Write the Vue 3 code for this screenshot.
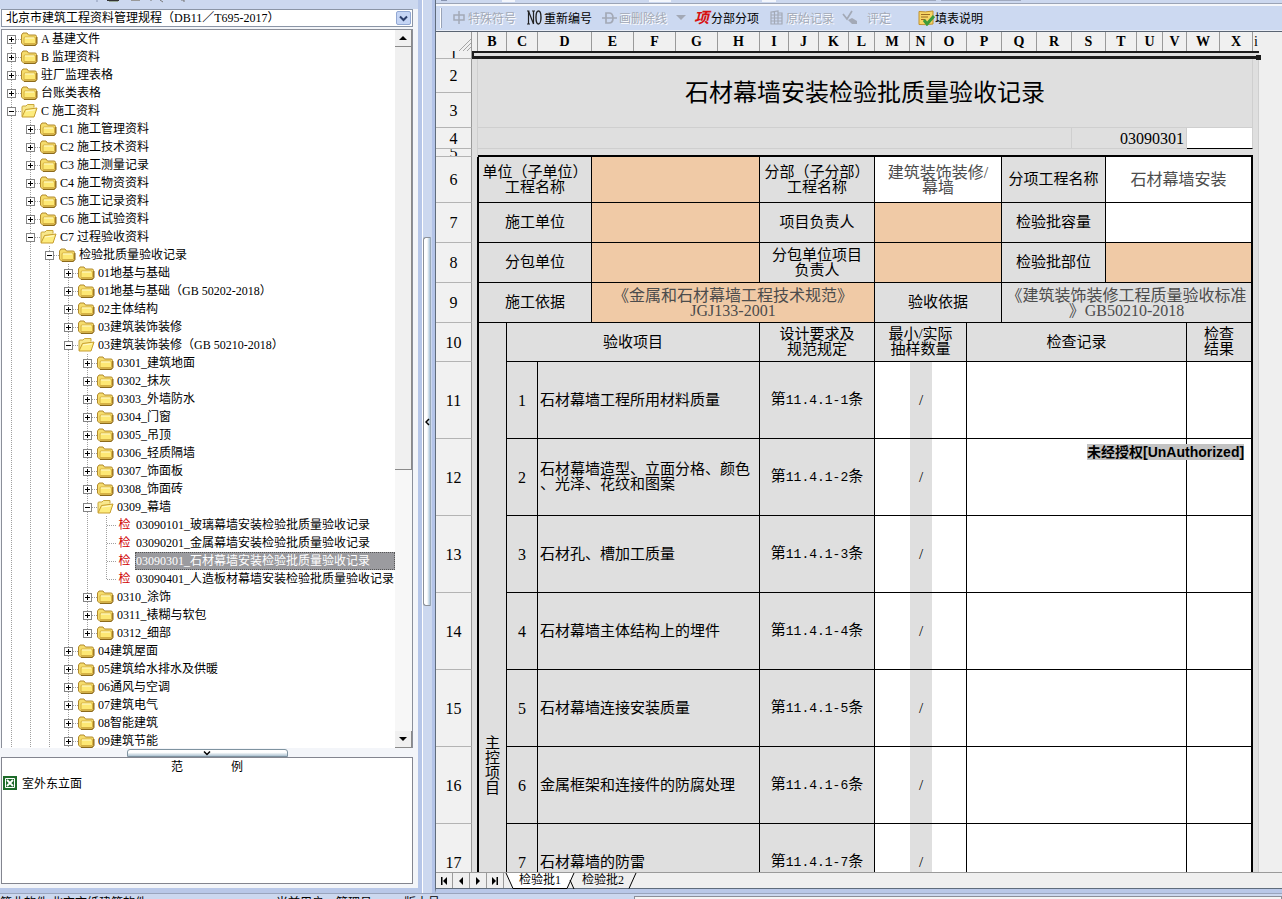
<script setup>
import { ref } from 'vue'

const regulation = ref('db11')
const selected = ref('03090301')

const rawTree = [
  [0, '+', 'A 基建文件'],
  [0, '+', 'B 监理资料'],
  [0, '+', '驻厂监理表格'],
  [0, '+', '台账类表格'],
  [0, '-', 'C 施工资料', 'open'],
  [1, '+', 'C1 施工管理资料'],
  [1, '+', 'C2 施工技术资料'],
  [1, '+', 'C3 施工测量记录'],
  [1, '+', 'C4 施工物资资料'],
  [1, '+', 'C5 施工记录资料'],
  [1, '+', 'C6 施工试验资料'],
  [1, '-', 'C7 过程验收资料', 'open'],
  [2, '-', '检验批质量验收记录'],
  [3, '+', '01地基与基础'],
  [3, '+', '01地基与基础（GB 50202-2018）'],
  [3, '+', '02主体结构'],
  [3, '+', '03建筑装饰装修'],
  [3, '-', '03建筑装饰装修（GB 50210-2018）', 'open'],
  [4, '+', '0301_建筑地面'],
  [4, '+', '0302_抹灰'],
  [4, '+', '0303_外墙防水'],
  [4, '+', '0304_门窗'],
  [4, '+', '0305_吊顶'],
  [4, '+', '0306_轻质隔墙'],
  [4, '+', '0307_饰面板'],
  [4, '+', '0308_饰面砖'],
  [4, '-', '0309_幕墙', 'open'],
  [5, '', '03090101_玻璃幕墙安装检验批质量验收记录'],
  [5, '', '03090201_金属幕墙安装检验批质量验收记录'],
  [5, '', '03090301_石材幕墙安装检验批质量验收记录'],
  [5, '', '03090401_人造板材幕墙安装检验批质量验收记录', 'last'],
  [4, '+', '0310_涂饰'],
  [4, '+', '0311_裱糊与软包'],
  [4, '+', '0312_细部', 'last'],
  [3, '+', '04建筑屋面'],
  [3, '+', '05建筑给水排水及供暖'],
  [3, '+', '06通风与空调'],
  [3, '+', '07建筑电气'],
  [3, '+', '08智能建筑'],
  [3, '+', '09建筑节能'],
]
const tree = rawTree.map(([depth, sign, label, flag], i) => ({
  depth, sign, label,
  open: flag === 'open',
  last: flag === 'last',
  first: i === 0,
  code: label.slice(0, 8),
}))

const columns = [
  ['', 6], ['B', 29], ['C', 31], ['D', 54], ['E', 42], ['F', 42], ['G', 42], ['H', 42],
  ['I', 29], ['J', 30], ['K', 30], ['L', 26], ['M', 35], ['N', 22], ['O', 35], ['P', 35],
  ['Q', 35], ['R', 35], ['S', 34], ['T', 31], ['U', 26], ['V', 24], ['W', 33], ['X', 33], ['i', 6],
]

const formRows = [
  { n: 6, h: 46, cells: [
    [3, '单位（子单位）\n工程名称'], [4, '', 'peach'], [4, '分部（子分部）\n工程名称'],
    [4, '建筑装饰装修/\n幕墙', 'white fill'], [3, '分项工程名称'], [5, '石材幕墙安装', 'white fill edge'],
  ] },
  { n: 7, h: 40, cells: [
    [3, '施工单位'], [4, '', 'peach'], [4, '项目负责人'], [4, '', 'peach'], [3, '检验批容量'], [5, '', 'white edge'],
  ] },
  { n: 8, h: 40, cells: [
    [3, '分包单位'], [4, '', 'peach'], [4, '分包单位项目\n负责人'], [4, '', 'peach'], [3, '检验批部位'], [5, '', 'peach edge'],
  ] },
  { n: 9, h: 40, cells: [
    [3, '施工依据'], [8, '《金属和石材幕墙工程技术规范》\nJGJ133-2001', 'peach fill'], [4, '验收依据'],
    [8, '《建筑装饰装修工程质量验收标准\n》GB50210-2018', 'fill edge'],
  ] },
]

const items = [
  [11, '1', '石材幕墙工程所用材料质量'],
  [12, '2', '石材幕墙造型、立面分格、颜色\n、光泽、花纹和图案'],
  [13, '3', '石材孔、槽加工质量'],
  [14, '4', '石材幕墙主体结构上的埋件'],
  [15, '5', '石材幕墙连接安装质量'],
  [16, '6', '金属框架和连接件的防腐处理'],
  [17, '7', '石材幕墙的防雷'],
  ['', '', ''], ['', '', ''], ['', '', ''], ['', '', ''],
]
</script>

<template>
  <div class="app">
    <div class="work">
      <aside class="left">
        <div class="strip">
          <svg width="200" height="4" viewBox="0 0 200 4" aria-hidden="true">
            <path d="M97 0v2" stroke="#8b98b5" />
            <path d="M107 0h12v1h-12z" fill="#333" />
            <path d="M109 1h9v1h-9z" fill="#9a9" />
            <path d="M131 0h9v1h-9z" fill="#999" />
            <path d="M150 0h2M160 0l3 2M181 0h3v2" stroke="#777" fill="none" />
          </svg>
        </div>
        <div class="combo">
          <select v-model="regulation" aria-label="规程">
            <option value="db11">北京市建筑工程资料管理规程（DB11／T695-2017）</option>
          </select>
          <span class="combo-arrow">
            <svg width="9" height="7" viewBox="0 0 9 7"><path d="M1 1.5l3.5 3.5L8 1.5" fill="none" stroke="#2c3e6b" stroke-width="2" /></svg>
          </span>
        </div>

        <div class="tree-box">
          <ul class="tree">
            <li v-for="(row, i) in tree" :key="i" class="tree-row">
              <i v-for="g in row.depth" :key="g" class="guide"></i>
              <span class="node" :class="{ last: row.last, first: row.first }">
                <button v-if="row.sign" class="expander" :aria-label="row.sign === '+' ? '展开' : '折叠'">
                  <svg width="9" height="9" viewBox="0 0 9 9">
                    <path d="M2 4.5h5" stroke="#000" />
                    <path v-if="row.sign === '+'" d="M4.5 2v5" stroke="#000" />
                  </svg>
                </button>
              </span>
              <span v-if="!row.sign" class="leaf-icon">检</span>
              <svg v-else-if="row.open" class="folder" width="17" height="16" viewBox="0 0 17 16">
                <path d="M1 13.500V4q0-1 1-1h3l1.500-1.500H13v3" fill="#f8e88c" stroke="#c9a63a" />
                <path d="M1 14L4.500 6.500L16 5L13 14z" fill="#fdec7e" stroke="#c79d2e" />
                <path d="M5 8l9-1.200" stroke="#fffbd0" />
              </svg>
              <svg v-else class="folder" width="17" height="16" viewBox="0 0 17 16">
                <path d="M.5 12V4l1.500-2h4l1.500 2H14q1.500 0 1.500 1.500V12.500L14 14H2.500z" fill="#f5dc6c" stroke="#b28a2c" />
                <path d="M3 12.500V7q0-1 1-1h9.500q1 0 1 1v5.500z" fill="#fde874" stroke="#d6b143" />
                <path d="M3 14.500h11.500l1.500-2V6" fill="none" stroke="#8c6a1c" />
                <path d="M4 7h9" stroke="#fffbd2" />
              </svg>
              <button
                class="label"
                :class="{ sel: row.code === selected }"
                @click="selected = row.code"
              >{{ row.label }}</button>
            </li>
          </ul>
          <div class="scroll">
            <button class="sb" aria-label="向上"><svg width="8" height="4" viewBox="0 0 8 4"><path d="M0 4l4-4 4 4z" /></svg></button>
            <div class="thumb"></div>
            <div class="track"></div>
            <button class="sb" aria-label="向下"><svg width="8" height="4" viewBox="0 0 8 4"><path d="M0 0l4 4 4-4z" /></svg></button>
          </div>
        </div>

        <div class="hsplit">
          <button class="hgrip" aria-label="收起范例">
            <svg width="8" height="5" viewBox="0 0 8 5"><path d="M1 .5l3 3 3-3" fill="none" stroke="#000" stroke-width="1.500" /></svg>
          </button>
        </div>

        <section class="examples">
          <h2 class="ex-head"><span>范</span><span>例</span></h2>
          <a class="ex-item" href="#">
            <svg width="14" height="14" viewBox="0 0 14 14">
              <path d="M0 0h14v14H0z" fill="#1d6b2a" />
              <path d="M2.500 2.500h9v9h-9z" fill="none" stroke="#fff" />
              <path d="M4 4l6 6M10 4l-6 6" stroke="#fff" stroke-width="1.800" />
            </svg>
            <span>室外东立面</span>
          </a>
        </section>
      </aside>

      <div class="vsplit">
        <button class="vgrip" aria-label="收起左栏">
          <svg width="5" height="8" viewBox="0 0 5 8"><path d="M4 1L1 4l3 3" fill="none" stroke="#000" stroke-width="1.500" /></svg>
        </button>
      </div>

      <main class="right">
        <div class="strip2">
          <svg width="600" height="3" viewBox="0 0 600 3" aria-hidden="true">
            <path d="M66 0h13v2H66zM213 0h22v2h-22zM326 0h14v2h-14z" fill="#f3f6fc" />
            <path d="M434 0h66v1h-66zM505 0h80v1h-80z" fill="#9fa9bf" />
            <path d="M5 0h6v1H5z" fill="#8894b0" />
          </svg>
        </div>
        <div class="toolbar">
          <i class="grip"></i>
          <button class="tool t1 off">
            <svg width="12" height="13" viewBox="0 0 12 13"><path d="M1 4h10v5H1zM6 0v13" fill="none" stroke="currentColor" stroke-width="1.500" /></svg>
            <span>特殊符号</span>
          </button>
          <button class="tool t2">
            <svg width="15" height="15" viewBox="0 0 15 15">
              <path d="M1.500 1v13M6.500 1v13M1.500 1l5 13M0 1h2.500M5 1h3M0 14h3" fill="none" stroke="#222" stroke-width="1.200" />
              <ellipse cx="11.500" cy="7.500" rx="2.500" ry="6.500" fill="none" stroke="#222" stroke-width="1.400" />
            </svg>
            <span>重新编号</span>
          </button>
          <button class="tool t3 off">
            <svg width="15" height="12" viewBox="0 0 15 12"><path d="M4 1h3q4 0 4 5t-4 5H4zM0 6h15" fill="none" stroke="currentColor" stroke-width="1.700" /></svg>
            <span>画删除线</span>
            <svg class="drop" width="10" height="5" viewBox="0 0 10 5"><path d="M0 0h10L5 5z" fill="#a3a9b6" /></svg>
          </button>
          <button class="tool t4">
            <b class="xiang">项</b>
            <span>分部分项</span>
          </button>
          <button class="tool t5 off">
            <svg width="13" height="15" viewBox="0 0 13 15">
              <path d="M1 2l7-1v13H1zM8 3h4v11H8M1 5h11M1 8h11M1 11h11M4.500 1.500V14" fill="none" stroke="currentColor" stroke-width="1.200" />
            </svg>
            <span>原始记录</span>
          </button>
          <button class="tool t6 off">
            <svg width="16" height="15" viewBox="0 0 16 15">
              <path d="M1 4l4 5 5-8" fill="none" stroke="currentColor" stroke-width="1.700" />
              <path d="M6 10l4-2 5 3v3h-5z" fill="currentColor" />
            </svg>
            <span>评定</span>
          </button>
          <button class="tool t7">
            <svg width="17" height="16" viewBox="0 0 17 16">
              <path d="M1 1.500q6 1 14-.5v13q-8 1-14 .5z" fill="#f7d565" stroke="#c1912e" />
              <path d="M3 4.500h9M3 7h7M3 9.500h4" stroke="#9b6b22" />
              <path d="M6 10l3 4 7-8" fill="none" stroke="#3d9a3b" stroke-width="3" />
            </svg>
            <span>填表说明</span>
          </button>
        </div>

        <div class="sheet">
          <table>
            <colgroup>
              <col class="c-head" />
              <col v-for="c in columns" :key="c[0]" :style="{ width: c[1] + 'px' }" />
            </colgroup>
            <thead>
              <tr>
                <th class="corner">
                  <svg width="12" height="12" viewBox="0 0 12 12"><path d="M0 12L12 0M4 12l8-8M8 12l4-4" stroke="#a5a5a5" /></svg>
                </th>
                <th v-for="c in columns" :key="c[0]" class="colh" :class="{ thin: c[0] === 'i' }">{{ c[0] }}</th>
              </tr>
            </thead>
            <tbody>
              <tr>
                <th class="rowh"><div :style="{ height: '7px' }">1</div></th>
                <td colspan="25" class="picked"><i class="handle"></i></td>
              </tr>
              <tr>
                <th class="rowh"><div :style="{ height: '33px' }">2</div></th>
                <td rowspan="2" class="side"></td>
                <td colspan="23" rowspan="2" class="title">石材幕墙安装检验批质量验收记录</td>
                <td rowspan="2" class="side"></td>
              </tr>
              <tr>
                <th class="rowh"><div :style="{ height: '34px' }">3</div></th>
              </tr>
              <tr>
                <th class="rowh"><div :style="{ height: '20px' }">4</div></th>
                <td class="side"></td>
                <td colspan="17" class="soft"></td>
                <td colspan="4" class="soft number">03090301</td>
                <td colspan="2" class="blank"></td>
                <td class="side"></td>
              </tr>
              <tr>
                <th class="rowh"><div :style="{ height: '7px' }">5</div></th>
                <td class="side"></td>
                <td colspan="23" class="topline"></td>
                <td class="side"></td>
              </tr>
              <tr v-for="r in formRows" :key="r.n">
                <th class="rowh"><div :style="{ height: r.h - 1 + 'px' }">{{ r.n }}</div></th>
                <td class="side dark"></td>
                <td v-for="(c, k) in r.cells" :key="k" :colspan="c[0]" class="cell" :class="[c[2], { start: k === 0 }]">{{ c[1] }}</td>
                <td class="side"></td>
              </tr>
              <tr>
                <th class="rowh"><div :style="{ height: '38px' }">10</div></th>
                <td class="side dark"></td>
                <td rowspan="12" class="cell start">主<br />控<br />项<br />目</td>
                <td colspan="6" class="cell">验收项目</td>
                <td colspan="4" class="cell">设计要求及<br />规范规定</td>
                <td colspan="3" class="cell">最小/实际<br />抽样数量</td>
                <td colspan="7" class="cell">检查记录</td>
                <td colspan="2" class="cell edge">检查<br />结果</td>
                <td class="side"></td>
              </tr>
              <tr v-for="(it, i) in items" :key="i">
                <th class="rowh"><div :style="{ height: '76px' }">{{ it[0] }}</div></th>
                <td class="side dark"></td>
                <td class="cell num">{{ it[1] }}</td>
                <td colspan="5" class="cell name">{{ it[2] }}</td>
                <td colspan="4" class="cell"><template v-if="it[1]">第<span class="mono">11.4.1-{{ it[1] }}</span>条</template></td>
                <td class="cell white open"></td>
                <td class="cell slash"><template v-if="it[1]">/</template></td>
                <td class="cell white"></td>
                <td colspan="7" class="cell white"></td>
                <td colspan="2" class="cell white edge"></td>
                <td class="side"></td>
              </tr>
            </tbody>
          </table>
          <div class="stamp">未经授权[UnAuthorized]</div>
        </div>

        <div class="tabs">
          <button class="nav" aria-label="首页"><svg width="8" height="8" viewBox="0 0 8 8"><path d="M1 0h1.500v8H1zM7 0v8L3 4z" /></svg></button>
          <button class="nav" aria-label="上页"><svg width="8" height="8" viewBox="0 0 8 8"><path d="M6 0v8L2 4z" /></svg></button>
          <button class="nav" aria-label="下页"><svg width="8" height="8" viewBox="0 0 8 8"><path d="M2 0v8l4-4z" /></svg></button>
          <button class="nav" aria-label="末页"><svg width="8" height="8" viewBox="0 0 8 8"><path d="M1 0v8l4-4zM5.500 0H7v8H5.500z" /></svg></button>
          <button class="tab on">
            <svg width="70" height="16" viewBox="0 0 70 16"><path d="M1 0l7 15.500h54L69 0" fill="#fff" stroke="#000" /><path d="M65 7l4 9" stroke="#000" /></svg>
            <span>检验批1</span>
          </button>
          <button class="tab two">
            <svg width="62" height="16" viewBox="0 0 62 16"><path d="M61 0l-7 15.500" fill="none" stroke="#000" /></svg>
            <span>检验批2</span>
          </button>
        </div>
      </main>
    </div>
    <footer class="status">
      <span class="s1">筑业软件 北京市纸建筑软件</span>
      <span class="s2">当前用户：管理员</span>
      <span class="s3">版本号</span>
      <span class="s4"></span>
    </footer>
  </div>
</template>

<style>
html,
body {
  margin: 0;
  overflow: hidden;
}
</style>

<style scoped>
* {
  box-sizing: border-box;
}
.app {
  height: 100vh;
  overflow: hidden;
  background: #ccd8ef;
  font-family: "Liberation Serif", "Noto Sans CJK SC", sans-serif;
  font-size: 12px;
  color: #000;
}
button {
  font: inherit;
  color: inherit;
  border: 0;
  padding: 0;
  background: none;
}
svg {
  display: block;
  flex: none;
}
.work {
  display: flex;
  height: calc(100vh - 6px);
}

/* left panel */
.left {
  display: flex;
  flex-direction: column;
  flex: none;
  width: 422px;
  padding: 0 5px 4px 1px;
  background: #f3f5f9;
  border-right: 4px solid #b6c6e8;
  border-bottom: 5px solid #b9c8e8;
}
.strip {
  flex: none;
  height: 9px;
  margin: 0 -5px 0 -1px;
  background: #ccd8ef;
}
.combo {
  display: flex;
  flex: none;
  position: relative;
  height: 18px;
  margin-bottom: 2px;
  border: 1px solid #8b95a6;
  background: #fff;
}
.combo select {
  flex: 1;
  appearance: none;
  border: 0;
  padding: 0 0 0 4px;
  background: none;
  font: inherit;
  color: #000;
  outline: 0;
}
.combo-arrow {
  position: absolute;
  right: 1px;
  top: 1px;
  display: flex;
  align-items: center;
  justify-content: center;
  width: 15px;
  height: 14px;
  background: #c5d5f5;
  border: 1px solid #92a8d3;
  border-radius: 2px;
  pointer-events: none;
}
.tree-box {
  display: flex;
  flex: 1;
  min-height: 0;
  border: 1px solid #8b8f99;
  border-bottom: 0;
  background: #fff;
}
.tree {
  flex: 1;
  min-width: 0;
  margin: 0;
  padding: 0;
  list-style: none;
  overflow: hidden;
}
.tree-row {
  display: flex;
  align-items: center;
  height: 18px;
}
.guide,
.node {
  flex: none;
  position: relative;
  width: 19px;
  height: 18px;
}
.guide::before,
.node::before {
  content: "";
  position: absolute;
  left: 9px;
  top: 0;
  width: 1px;
  height: 18px;
  background: repeating-linear-gradient(#a0a0a0 0 1px, transparent 1px 2px);
}
.node::after {
  content: "";
  position: absolute;
  left: 10px;
  top: 9px;
  width: 9px;
  height: 1px;
  background: repeating-linear-gradient(to right, #a0a0a0 0 1px, transparent 1px 2px);
}
.node.last::before {
  height: 9px;
}
.node.first::before {
  top: 9px;
  height: 9px;
}
.expander {
  position: absolute;
  left: 5px;
  top: 5px;
  z-index: 1;
  width: 9px;
  height: 9px;
  background: #fff;
  outline: 1px solid #848484;
  outline-offset: -1px;
}
.folder {
  width: 17px;
}
.leaf-icon {
  flex: none;
  width: 17px;
  text-align: center;
  font-size: 12px;
  line-height: 18px;
  color: #d00000;
}
.label {
  height: 18px;
  margin-left: 2px;
  padding: 0 1px;
  line-height: 16px;
  text-align: left;
  white-space: nowrap;
}
.label.sel {
  flex: 1;
  color: #fff;
  background: #9b9b9f;
  outline: 1px dotted #555;
  outline-offset: -1px;
}
.scroll {
  display: flex;
  flex-direction: column;
  flex: none;
  width: 17px;
}
.sb {
  display: flex;
  align-items: center;
  justify-content: center;
  flex: none;
  height: 17px;
  background: #f0f0f0;
  border-right: 1px solid #8a8a8a;
  border-bottom: 1px solid #8a8a8a;
}
.thumb {
  flex: 423;
  background: #f0f0f0;
  border-right: 1px solid #8a8a8a;
  border-bottom: 1px solid #8a8a8a;
}
.track {
  flex: 261;
  background: #f7f7f7;
}
.hsplit {
  display: flex;
  justify-content: center;
  flex: none;
  height: 9px;
  padding-top: 1px;
}
.hgrip {
  display: flex;
  align-items: center;
  justify-content: center;
  width: 161px;
  height: 8px;
  border: 1px solid #7f93a0;
  border-radius: 3px 3px 0 0;
  background: linear-gradient(#fff 40%, #aec3d2);
}
.examples {
  flex: none;
  height: 127px;
  border: 1px solid #83858f;
  background: #fff;
}
.ex-head {
  display: flex;
  justify-content: center;
  gap: 48px;
  margin: 0;
  font-size: 12px;
  font-weight: 400;
  line-height: 18px;
}
.ex-item {
  display: flex;
  align-items: center;
  gap: 5px;
  padding-left: 1px;
  height: 14px;
  color: #000;
  text-decoration: none;
}

/* splitter */
.vsplit {
  display: flex;
  align-items: center;
  flex: none;
  width: 13px;
  padding: 0 3px 50px 1px;
  background: linear-gradient(to right, #fff 0 1px, #ccd8ef 1px 10px, #b4c4e8 10px);
}
.vgrip {
  display: flex;
  align-items: center;
  justify-content: center;
  width: 8px;
  height: 369px;
  border: 1px solid #8b9098;
  border-right-color: #9aaab8;
  border-radius: 3px 0 0 3px;
  background: linear-gradient(to right, #fff 50%, #a9c3d8);
}

/* right panel */
.right {
  display: flex;
  flex-direction: column;
  flex: 1;
  min-width: 0;
  border-left: 1px solid #5f6c7c;
  border-bottom: 4px solid #b9c8e8;
}
.strip2 {
  flex: none;
  height: 6px;
  border-bottom: 2px solid #f5f7fb;
  box-shadow: inset 0 -1px #9ba4b6;
}
.toolbar {
  display: flex;
  align-items: center;
  flex: none;
  height: 26px;
  padding-bottom: 2px;
  background: #ccd9f1;
  border-bottom: 1px solid #5a6472;
  box-shadow: inset 0 -1px #e8edf7;
}
.grip {
  flex: none;
  width: 2px;
  height: 20px;
  margin-left: 4px;
  border-left: 1px solid #fff;
  border-right: 1px solid #98a3b8;
}
.tool {
  display: flex;
  align-items: center;
  flex: none;
  gap: 2px;
  height: 20px;
  white-space: nowrap;
}
.off {
  color: #a3a9b6;
  text-shadow: 1px 1px #fff;
}
.t1 {
  margin-left: 11px;
  gap: 3px;
}
.t2 {
  margin-left: 11px;
}
.t3 {
  margin-left: 10px;
}
.t3 .drop {
  margin-left: 7px;
}
.t4 {
  margin-left: 8px;
}
.xiang {
  font-size: 15px;
  line-height: 18px;
  color: #d81010;
  font-style: italic;
}
.t5 {
  margin-left: 11px;
  gap: 3px;
}
.t6 {
  margin-left: 8px;
  gap: 9px;
}
.t7 {
  margin-left: 27px;
  gap: 0;
}

/* sheet */
.sheet {
  position: relative;
  flex: 1;
  min-height: 0;
  overflow: hidden;
  background: #efefef;
}
table {
  width: 823px;
  table-layout: fixed;
  border-collapse: separate;
  border-spacing: 0;
  font-size: 15px;
  line-height: 15px;
}
th,
td {
  padding: 0;
}
.c-head {
  width: 36px;
}
.corner,
.colh {
  height: 19px;
  background: #f0f0f0;
  border-right: 1px solid #9a9a9a;
  font-size: 14px;
  line-height: 18px;
  overflow: hidden;
}
.thin {
  border-right: 0;
  font-weight: 400;
}
.corner svg {
  margin: 6px 0 0 23px;
}
.rowh {
  background: #f1f1f1;
  border-right: 1px solid #9a9a9a;
  border-bottom: 1px solid #b4b4b4;
  font-size: 16px;
  font-weight: 400;
}
.rowh div {
  display: flex;
  align-items: center;
  justify-content: center;
  overflow: hidden;
}
.picked {
  position: relative;
  border: 2px solid #1c1c1c;
  border-width: 2px 0 3px 2px;
  background: #dfdfdf;
}
.handle {
  position: absolute;
  right: -2px;
  bottom: -4px;
  width: 5px;
  height: 5px;
  background: #1c1c1c;
}
.side {
  background: #dfdfdf;
  border-right: 1px solid #cfcfcf;
}
.dark {
  border-right-color: #000;
}
.title {
  background: #dfdfdf;
  border-right: 1px solid #cfcfcf;
  border-bottom: 1px solid #cfcfcf;
  font-size: 24px;
  line-height: 30px;
  text-align: center;
}
.soft {
  background: #dfdfdf;
  border-right: 1px solid #cfcfcf;
  border-bottom: 1px solid #cfcfcf;
}
.number {
  padding-right: 2px;
  font-size: 16px;
  text-align: right;
}
.blank {
  background: #fff;
  border-right: 1px solid #cfcfcf;
  border-bottom: 1px solid #000;
}
.topline {
  background: #dfdfdf;
  border-bottom: 2px solid #000;
}
.cell {
  background: #dfdfdf;
  border-right: 1px solid #000;
  border-bottom: 1px solid #000;
  text-align: center;
  white-space: pre-line;
}
.start {
  border-left: 1px solid #000;
}
.edge {
  border-right-width: 2px;
}
.peach {
  background: #f0caa6;
}
.white {
  background: #fff;
}
.fill {
  font-size: 16px;
  color: #4c4c4c;
  white-space: pre;
}
.name {
  padding-left: 2px;
  text-align: left;
  white-space: pre;
}
.num {
  font-size: 16px;
}
.mono {
  font-family: "Liberation Mono", monospace;
  font-size: 13px;
}
.open {
  border-right-color: #fff;
}
.slash {
  border-right-color: #d3d3d3;
}
.open,
.slash {
  border-right-width: 0;
  box-shadow: none;
}
.stamp {
  position: absolute;
  left: 651px;
  top: 412px;
  background: #c3c3c3;
  font-family: "Liberation Sans", "Noto Sans CJK SC", sans-serif;
  font-size: 14px;
  font-weight: 700;
  line-height: 16px;
  white-space: nowrap;
}
.tabs {
  display: flex;
  flex: none;
  height: 17px;
  background: #efefef;
  border-top: 1px solid #9a9a9a;
  border-bottom: 1px solid #5f6c7c;
}
.nav {
  display: flex;
  align-items: center;
  justify-content: center;
  width: 17px;
  border-right: 1px solid #9a9a9a;
}
.tab {
  position: relative;
  height: 15px;
}
.tab svg {
  position: absolute;
  left: 0;
  top: 0;
}
.tab span {
  position: relative;
  line-height: 15px;
}
.on {
  width: 70px;
  margin-left: 1px;
}
.two {
  width: 62px;
  padding-right: 6px;
}

/* status */
.status {
  display: flex;
  height: 20px;
  border-top: 1px solid #9aa5bd;
  background: #ccd8ef;
  line-height: 18px;
  white-space: nowrap;
}
.s1 {
  width: 276px;
}
.s2 {
  width: 128px;
}
.s3 {
  width: 230px;
}
.s4 {
  flex: 1;
  margin-top: 2px;
  background: #f4f4f4;
  border: 1px solid #8b8f99;
}
</style>
